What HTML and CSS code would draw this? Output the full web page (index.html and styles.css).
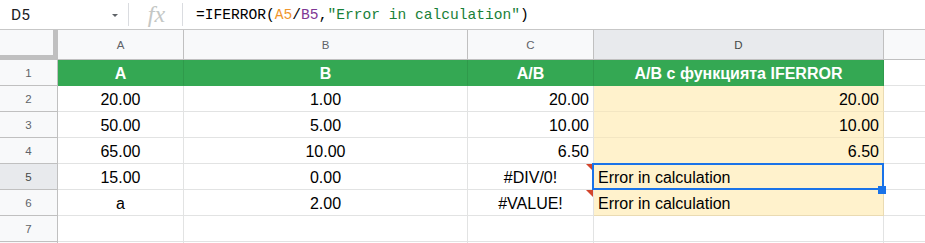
FILE: index.html
```html
<!DOCTYPE html>
<html>
<head>
<meta charset="utf-8">
<link rel="stylesheet" href="styles.css">
</head>
<body>
<div class="formula-bar">
  <div class="name-box"><span class="name">D5</span><span class="caret"></span></div>
  <div class="sep"></div>
  <div class="fx">fx</div>
  <div class="sep"></div>
  <div class="formula">=IFERROR(<span class="ref1">A5</span>/<span class="ref2">B5</span>,<span class="str">"Error in calculation"</span>)</div>
</div>
<div class="grid">
  <div class="corner"></div>
  <div class="ch">A</div>
  <div class="ch">B</div>
  <div class="ch">C</div>
  <div class="ch sel">D</div>
  <div class="ch last"></div>

  <div class="rh">1</div>
  <div class="c hd center">A</div>
  <div class="c hd center">B</div>
  <div class="c hd center">A/B</div>
  <div class="c hd center">A/B с функцията IFERROR</div>
  <div class="c last"></div>

  <div class="rh">2</div>
  <div class="c center">20.00</div>
  <div class="c center">1.00</div>
  <div class="c right">20.00</div>
  <div class="c y right">20.00</div>
  <div class="c last"></div>

  <div class="rh">3</div>
  <div class="c center">50.00</div>
  <div class="c center">5.00</div>
  <div class="c right">10.00</div>
  <div class="c y right">10.00</div>
  <div class="c last"></div>

  <div class="rh">4</div>
  <div class="c center">65.00</div>
  <div class="c center">10.00</div>
  <div class="c right">6.50</div>
  <div class="c y right">6.50</div>
  <div class="c last"></div>

  <div class="rh sel">5</div>
  <div class="c center">15.00</div>
  <div class="c center">0.00</div>
  <div class="c center err">#DIV/0!<span class="tri"></span></div>
  <div class="c y left">Error in calculation</div>
  <div class="c last"></div>

  <div class="rh">6</div>
  <div class="c center">a</div>
  <div class="c center">2.00</div>
  <div class="c center err">#VALUE!<span class="tri"></span></div>
  <div class="c y left ybottom">Error in calculation</div>
  <div class="c last"></div>

  <div class="rh">7</div>
  <div class="c"></div>
  <div class="c"></div>
  <div class="c"></div>
  <div class="c"></div>
  <div class="c last"></div>

  <div class="rh"></div>
  <div class="c"></div>
  <div class="c"></div>
  <div class="c"></div>
  <div class="c"></div>
  <div class="c last"></div>

  <div class="selection"><span class="handle"></span></div>
</div>
</body>
</html>
```
FILE: styles.css
```css
* { box-sizing: border-box; }
html, body {
  margin: 0;
  padding: 0;
  background: #fff;
  width: 925px;
  height: 243px;
  overflow: hidden;
  font-family: "Liberation Sans", Arial, sans-serif;
}
.formula-bar {
  height: 30px;
  border-bottom: 1px solid #c7c7c7;
  display: flex;
  align-items: center;
}
.name-box {
  width: 128px;
  height: 29px;
  display: flex;
  align-items: center;
  padding-left: 11px;
  padding-right: 10px;
}
.name {
  font-family: Roboto, "Liberation Sans", sans-serif;
  font-size: 15.5px;
  color: #202124;
  flex: 1;
}
.caret {
  width: 0;
  height: 0;
  border-left: 3.5px solid transparent;
  border-right: 3.5px solid transparent;
  border-top: 3.5px solid #5f6368;
  margin-top: 1px;
}
.sep {
  width: 1px;
  height: 23px;
  background: #dadce0;
}
.fx {
  width: 53px;
  text-align: center;
  font-family: "Liberation Serif", serif;
  font-style: italic;
  font-size: 24px;
  color: #c4c7c5;
  line-height: 29px;
  padding-left: 2px;
}
.formula {
  padding-left: 13px;
  font-family: "Liberation Mono", "DejaVu Sans Mono", monospace;
  font-size: 14.6px;
  color: #000;
  white-space: pre;
}
.ref1 { color: #f0962d; }
.ref2 { color: #7e3794; }
.str { color: #188038; }

.grid {
  position: relative;
  display: grid;
  grid-template-columns: 58px 126px 284px 126px 290px 1fr;
  grid-template-rows: 30px repeat(8, 26px);
}
.corner {
  background: #f8f9fa;
  border-right: 5px solid #c0c0c0;
  border-bottom: 5px solid #c0c0c0;
}
.ch {
  background: #f8f9fa;
  border-right: 1px solid #c0c0c0;
  border-bottom: 1px solid #c0c0c0;
  display: flex;
  align-items: center;
  justify-content: center;
  font-size: 11.5px;
  color: #5f6368;
  padding-top: 1px;
}
.ch.sel { background: #e8eaed; color: #444746; }
.ch.last { border-right: none; }
.rh {
  background: #f8f9fa;
  border-right: 1px solid #c0c0c0;
  border-bottom: 1px solid #c0c0c0;
  display: flex;
  align-items: center;
  justify-content: center;
  font-size: 11.5px;
  color: #5f6368;
}
.rh.sel { background: #e8eaed; color: #444746; }
.c {
  position: relative;
  border-right: 1px solid #e2e3e3;
  border-bottom: 1px solid #e2e3e3;
  display: flex;
  align-items: flex-end;
  padding: 0 4px 2px 4px;
  font-size: 16px;
  line-height: 18px;
  color: #000;
  white-space: nowrap;
}
.c.last { border-right: none; }
.center { justify-content: center; }
.right { justify-content: flex-end; }
.left { justify-content: flex-start; }
.hd {
  background: #34a853;
  color: #fff;
  font-weight: bold;
  border-right-color: #2f9a4b;
  border-bottom-color: #34a853;
}
.y {
  background: #fff2cc;
  border-right-color: #eadbb3;
  border-bottom-color: #f3e6c2;
}
.y.ybottom { border-bottom-color: #eadbb3; }
.tri {
  position: absolute;
  top: 0;
  right: 0;
  width: 0;
  height: 0;
  border-top: 7px solid #d2452c;
  border-left: 7px solid transparent;
}
.selection {
  position: absolute;
  left: 592px;
  top: 133px;
  width: 292px;
  height: 27px;
  border: 2px solid #1a73e8;
  pointer-events: none;
}
.handle {
  position: absolute;
  right: -4px;
  bottom: -6px;
  width: 8px;
  height: 8px;
  background: #1a73e8;
}
```
